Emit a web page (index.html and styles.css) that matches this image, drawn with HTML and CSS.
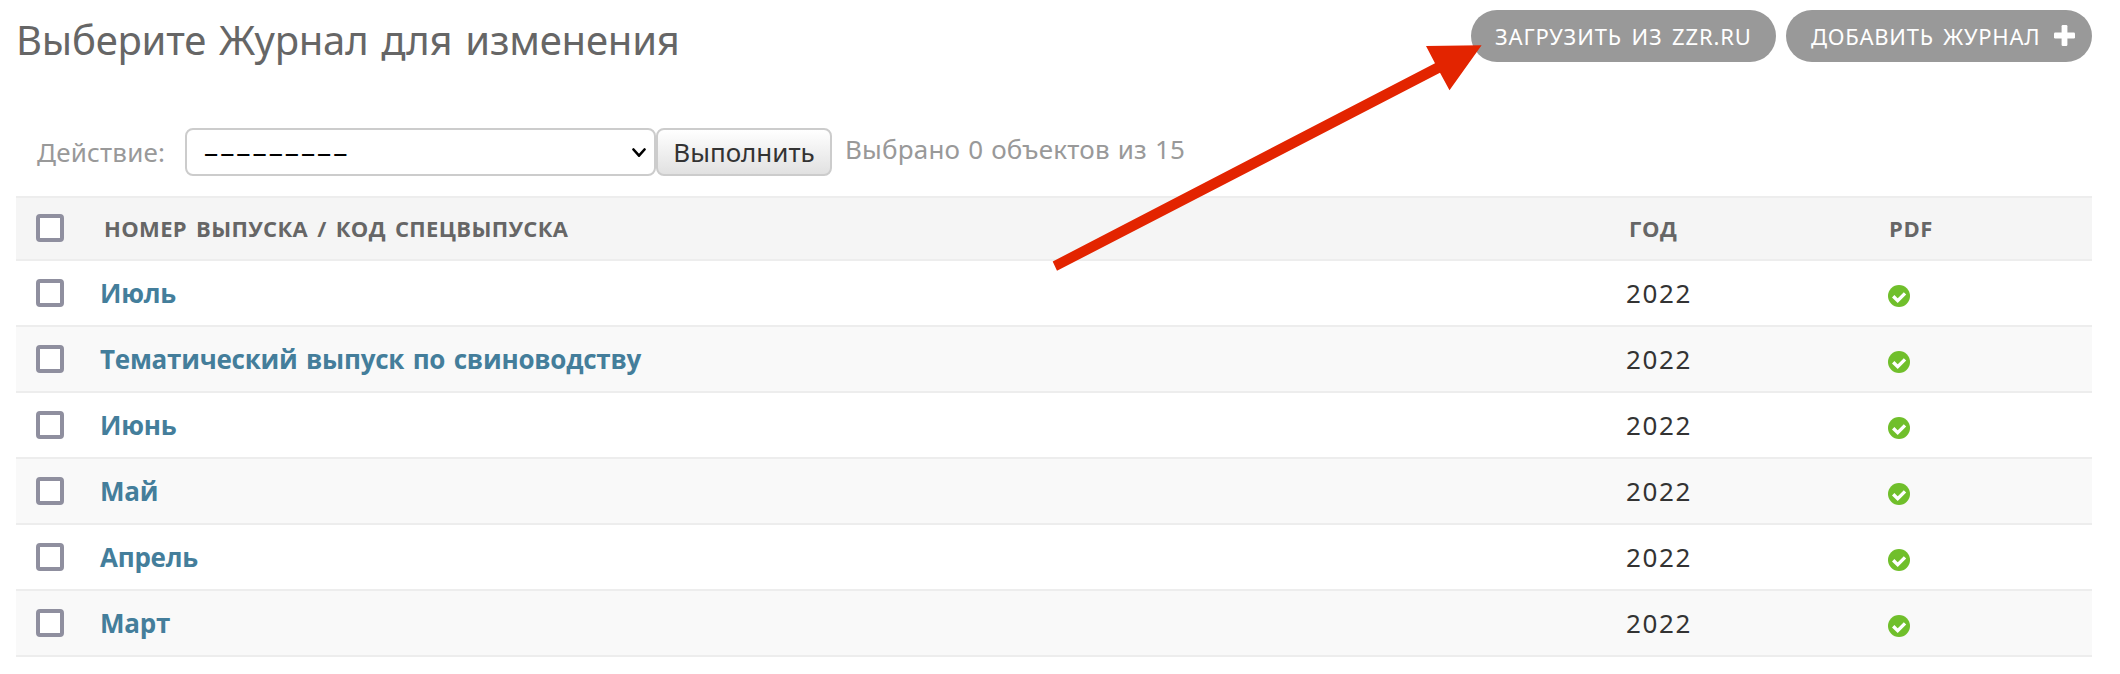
FILE: index.html
```html
<!DOCTYPE html>
<html lang="ru">
<head>
<meta charset="utf-8">
<title>Выберите Журнал для изменения</title>
<link rel="stylesheet" href="styles.css">
</head>
<body>
<svg class="defs" width="0" height="0" aria-hidden="true">
  <symbol id="yes" viewBox="0 0 22 22">
    <circle cx="11" cy="11" r="11" fill="#70bf2b"/>
    <path d="M5.2 11.2 L9.7 15.6 L17 8.4" fill="none" stroke="#fff" stroke-width="3.4"/>
  </symbol>
</svg>
<header class="top">
  <h1 class="title">Выберите Журнал для изменения</h1>
  <nav class="tools">
    <a class="tool tool-load">ЗАГРУЗИТЬ ИЗ ZZR.RU</a>
    <a class="tool tool-add">ДОБАВИТЬ ЖУРНАЛ
      <svg class="plus" viewBox="0 0 21 21"><rect x="0" y="7.6" width="21" height="5.8" rx="1.2"/><rect x="7.6" y="0" width="5.8" height="21" rx="1.2"/></svg>
    </a>
  </nav>
</header>
<section class="actions">
  <span class="label">Действие:</span>
  <div class="select"><span class="dashes">---------</span>
    <svg class="chevron" viewBox="0 0 14 10"><path d="M1.5 1.5 L7 7.7 L12.5 1.5"/></svg>
  </div>
  <button class="run" type="button">Выполнить</button>
  <span class="counter">Выбрано 0 объектов из 15</span>
</section>
<main class="list">
  <div class="row head"><i class="box"></i><span class="name">НОМЕР ВЫПУСКА / КОД СПЕЦВЫПУСКА</span><span class="year">ГОД</span><span class="pdf">PDF</span></div>
  <div class="row"><i class="box"></i><a class="name">Июль</a><span class="year">2022</span><svg class="yes"><use href="#yes"/></svg></div>
  <div class="row"><i class="box"></i><a class="name">Тематический выпуск по свиноводству</a><span class="year">2022</span><svg class="yes"><use href="#yes"/></svg></div>
  <div class="row"><i class="box"></i><a class="name">Июнь</a><span class="year">2022</span><svg class="yes"><use href="#yes"/></svg></div>
  <div class="row"><i class="box"></i><a class="name">Май</a><span class="year">2022</span><svg class="yes"><use href="#yes"/></svg></div>
  <div class="row"><i class="box"></i><a class="name">Апрель</a><span class="year">2022</span><svg class="yes"><use href="#yes"/></svg></div>
  <div class="row"><i class="box"></i><a class="name">Март</a><span class="year">2022</span><svg class="yes"><use href="#yes"/></svg></div>
</main>
<svg class="arrow" viewBox="1050 40 440 236"><path d="M1481.6 45.2 L1426 46 L1435 63.3 L1052.7 261.5 L1057 270.8 L1440 72.8 L1449.5 90.3 Z"/></svg>
</body>
</html>
```
FILE: styles.css
```css
* { box-sizing: border-box; }
body {
  margin: 0;
  height: 674px;
  padding: 10px 28px 0 16px;
  overflow: hidden;
  background: #fff;
  color: #333;
  font-family: "Noto Sans", "Open Sans", sans-serif;
  font-size: 26px;
  white-space: nowrap;
}
.defs { position: absolute; }

.top { display: flex; justify-content: space-between; height: 118px; }
.title {
  margin: 2px 0 0;
  height: 55px;
  line-height: 55px;
  font-size: 40px;
  font-weight: 400;
  letter-spacing: -0.2px;
  word-spacing: 2.6px;
  color: #666;
}
.tools { display: flex; gap: 10px; }
.tool {
  display: flex;
  align-items: center;
  height: 52px;
  padding-left: 24px;
  border-radius: 26px;
  background: #999;
  color: #fff;
  font-size: 22px;
  letter-spacing: 0.85px;
  word-spacing: 3px;
}
.tool-load { width: 305px; }
.tool-add { width: 306px; padding-left: 25px; letter-spacing: 0.75px; }
.plus { width: 21px; height: 21px; margin: -2px 0 0 14px; fill: #fff; }

.actions { display: flex; align-items: center; height: 48px; padding-left: 21px; color: #999; }
.label { width: 148px; letter-spacing: 0.2px; }
.select {
  display: flex;
  align-items: center;
  justify-content: space-between;
  width: 471px;
  height: 48px;
  padding: 0 8px 0 16px;
  border: 2px solid #ccc;
  border-radius: 8px;
  background: #fff;
  color: #000;
}
.dashes { transform: scaleX(1.93); transform-origin: 0 50%; }
.chevron { width: 14px; height: 10px; margin-top: 2px; fill: none; stroke: #000; stroke-width: 2.6; stroke-linecap: round; stroke-linejoin: round; }
.run {
  width: 176px;
  height: 48px;
  padding: 0;
  border: 2px solid #ccc;
  border-radius: 8px;
  background: linear-gradient(#fff, #e1e1e1);
  color: #333;
  font: inherit;
}
.counter { margin: -6px 0 0 13px; letter-spacing: 0.2px; word-spacing: 1px; }

.list { margin-top: 20px; border-top: 2px solid #ededed; }
.row {
  display: grid;
  grid-template-columns: 64px 1526px 262px 1fr;
  align-items: center;
  height: 66px;
  padding-left: 20px;
  border-bottom: 2px solid #ededed;
}
.row:nth-child(odd) { background: #f9f9f9; }
.row.head {
  height: 63px;
  background: #f5f5f5;
  color: #666;
  font-size: 22px;
  font-weight: 600;
}
.box { width: 28px; height: 28px; border: 4px solid #8f8f9f; border-radius: 4px; background: #fff; }
.head .box { margin-top: -1px; }
.name { font-family: "Open Sans", sans-serif; font-weight: 700; letter-spacing: -0.25px; word-spacing: 2px; color: #447e9b; }
.row.head span { margin-top: -2px; font-family: "Open Sans", sans-serif; font-weight: 700; }
.head .name { padding-left: 4px; letter-spacing: 0.35px; word-spacing: 3px; color: #666; }
.year { letter-spacing: 1.6px; }
.head .year { padding-left: 3px; letter-spacing: 0.6px; }
.head .pdf { padding-left: 1px; letter-spacing: 0.6px; }
.yes { width: 22px; height: 22px; margin-top: 6px; }

.arrow { position: absolute; left: 1050px; top: 40px; width: 440px; height: 236px; fill: #e32400; }
```
